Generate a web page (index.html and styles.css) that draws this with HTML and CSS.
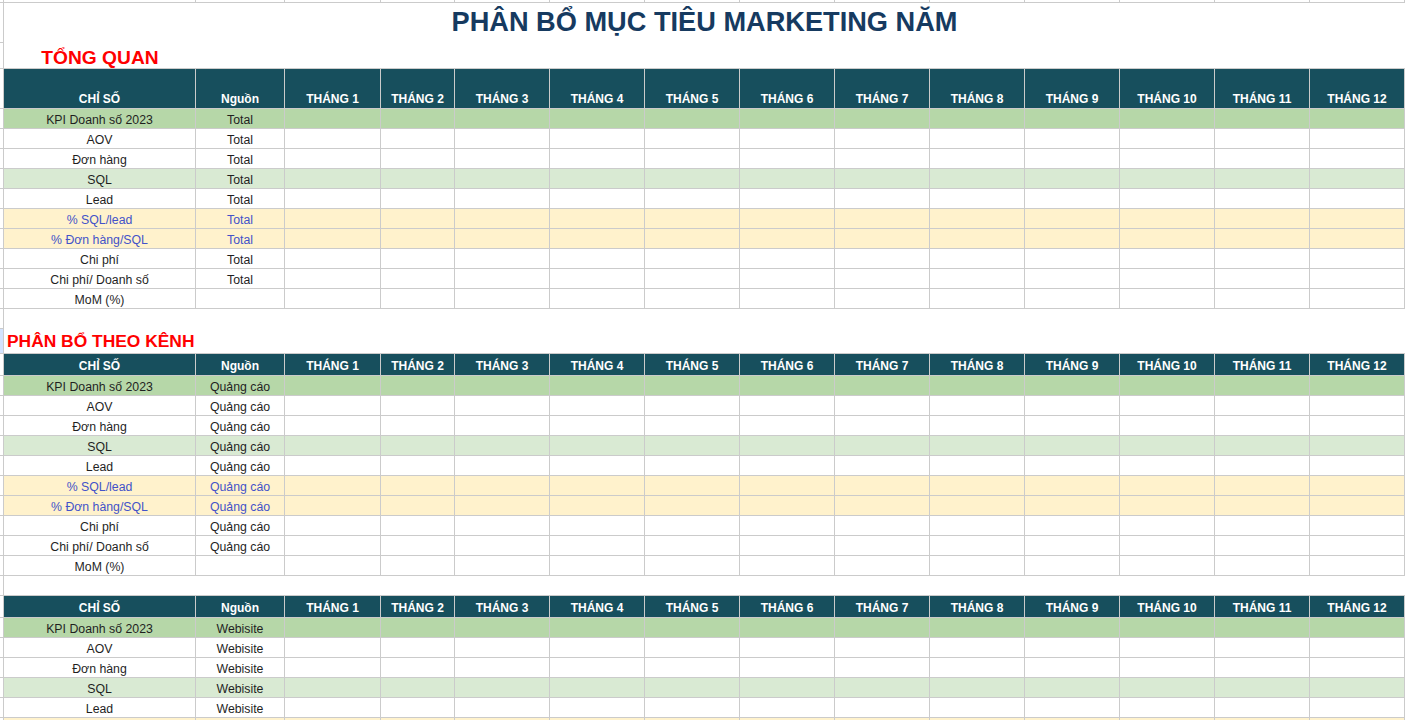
FILE: index.html
```html
<!DOCTYPE html>
<html lang="vi">
<head>
<meta charset="utf-8">
<title>Phân bổ mục tiêu marketing năm</title>
<link rel="stylesheet" href="styles.css">
</head>
<body>
<div class="sheet">
  <div class="row top"><div></div><div></div><div></div><div></div><div></div><div></div><div></div><div></div><div></div><div></div><div></div><div></div><div></div><div></div><div></div></div>
  <div class="row title-row"><div class="s"></div><div class="title">PHÂN BỔ MỤC TIÊU MARKETING NĂM</div></div>
  <div class="row sec sec1"><div class="s"></div><div class="seca center">TỔNG QUAN</div><div class="secfill"></div></div>

  <div class="row head tall"><div class="s"></div><div class="h-a">CHỈ SỐ</div><div class="h-a">Nguồn</div><div>THÁNG 1</div><div>THÁNG 2</div><div>THÁNG 3</div><div>THÁNG 4</div><div>THÁNG 5</div><div>THÁNG 6</div><div>THÁNG 7</div><div>THÁNG 8</div><div>THÁNG 9</div><div>THÁNG 10</div><div>THÁNG 11</div><div>THÁNG 12</div></div>
  <div class="row data kpi"><div class="s"></div><div class="t">KPI Doanh số 2023</div><div class="t">Total</div><div></div><div></div><div></div><div></div><div></div><div></div><div></div><div></div><div></div><div></div><div></div><div></div></div>
  <div class="row data"><div class="s"></div><div class="t">AOV</div><div class="t">Total</div><div></div><div></div><div></div><div></div><div></div><div></div><div></div><div></div><div></div><div></div><div></div><div></div></div>
  <div class="row data"><div class="s"></div><div class="t">Đơn hàng</div><div class="t">Total</div><div></div><div></div><div></div><div></div><div></div><div></div><div></div><div></div><div></div><div></div><div></div><div></div></div>
  <div class="row data sql"><div class="s"></div><div class="t">SQL</div><div class="t">Total</div><div></div><div></div><div></div><div></div><div></div><div></div><div></div><div></div><div></div><div></div><div></div><div></div></div>
  <div class="row data"><div class="s"></div><div class="t">Lead</div><div class="t">Total</div><div></div><div></div><div></div><div></div><div></div><div></div><div></div><div></div><div></div><div></div><div></div><div></div></div>
  <div class="row data rate"><div class="s"></div><div class="t">% SQL/lead</div><div class="t">Total</div><div></div><div></div><div></div><div></div><div></div><div></div><div></div><div></div><div></div><div></div><div></div><div></div></div>
  <div class="row data rate"><div class="s"></div><div class="t">% Đơn hàng/SQL</div><div class="t">Total</div><div></div><div></div><div></div><div></div><div></div><div></div><div></div><div></div><div></div><div></div><div></div><div></div></div>
  <div class="row data"><div class="s"></div><div class="t">Chi phí</div><div class="t">Total</div><div></div><div></div><div></div><div></div><div></div><div></div><div></div><div></div><div></div><div></div><div></div><div></div></div>
  <div class="row data"><div class="s"></div><div class="t">Chi phí/ Doanh số</div><div class="t">Total</div><div></div><div></div><div></div><div></div><div></div><div></div><div></div><div></div><div></div><div></div><div></div><div></div></div>
  <div class="row data"><div class="s"></div><div class="t">MoM (%)</div><div class="t"></div><div></div><div></div><div></div><div></div><div></div><div></div><div></div><div></div><div></div><div></div><div></div><div></div></div>

  <div class="row blank"><div class="s"></div><div class="blankfill"></div></div>
  <div class="row sec sec2"><div class="s sel"></div><div class="seca left">PHÂN BỔ THEO KÊNH</div><div class="secfill"></div></div>

  <div class="row head"><div class="s"></div><div class="h-a">CHỈ SỐ</div><div class="h-a">Nguồn</div><div>THÁNG 1</div><div>THÁNG 2</div><div>THÁNG 3</div><div>THÁNG 4</div><div>THÁNG 5</div><div>THÁNG 6</div><div>THÁNG 7</div><div>THÁNG 8</div><div>THÁNG 9</div><div>THÁNG 10</div><div>THÁNG 11</div><div>THÁNG 12</div></div>
  <div class="row data kpi"><div class="s"></div><div class="t">KPI Doanh số 2023</div><div class="t">Quảng cáo</div><div></div><div></div><div></div><div></div><div></div><div></div><div></div><div></div><div></div><div></div><div></div><div></div></div>
  <div class="row data"><div class="s"></div><div class="t">AOV</div><div class="t">Quảng cáo</div><div></div><div></div><div></div><div></div><div></div><div></div><div></div><div></div><div></div><div></div><div></div><div></div></div>
  <div class="row data"><div class="s"></div><div class="t">Đơn hàng</div><div class="t">Quảng cáo</div><div></div><div></div><div></div><div></div><div></div><div></div><div></div><div></div><div></div><div></div><div></div><div></div></div>
  <div class="row data sql"><div class="s"></div><div class="t">SQL</div><div class="t">Quảng cáo</div><div></div><div></div><div></div><div></div><div></div><div></div><div></div><div></div><div></div><div></div><div></div><div></div></div>
  <div class="row data"><div class="s"></div><div class="t">Lead</div><div class="t">Quảng cáo</div><div></div><div></div><div></div><div></div><div></div><div></div><div></div><div></div><div></div><div></div><div></div><div></div></div>
  <div class="row data rate"><div class="s"></div><div class="t">% SQL/lead</div><div class="t">Quảng cáo</div><div></div><div></div><div></div><div></div><div></div><div></div><div></div><div></div><div></div><div></div><div></div><div></div></div>
  <div class="row data rate"><div class="s"></div><div class="t">% Đơn hàng/SQL</div><div class="t">Quảng cáo</div><div></div><div></div><div></div><div></div><div></div><div></div><div></div><div></div><div></div><div></div><div></div><div></div></div>
  <div class="row data"><div class="s"></div><div class="t">Chi phí</div><div class="t">Quảng cáo</div><div></div><div></div><div></div><div></div><div></div><div></div><div></div><div></div><div></div><div></div><div></div><div></div></div>
  <div class="row data"><div class="s"></div><div class="t">Chi phí/ Doanh số</div><div class="t">Quảng cáo</div><div></div><div></div><div></div><div></div><div></div><div></div><div></div><div></div><div></div><div></div><div></div><div></div></div>
  <div class="row data"><div class="s"></div><div class="t">MoM (%)</div><div class="t"></div><div></div><div></div><div></div><div></div><div></div><div></div><div></div><div></div><div></div><div></div><div></div><div></div></div>

  <div class="row blank ruled"><div class="s"></div><div class="blankfill"></div></div>

  <div class="row head"><div class="s"></div><div class="h-a">CHỈ SỐ</div><div class="h-a">Nguồn</div><div>THÁNG 1</div><div>THÁNG 2</div><div>THÁNG 3</div><div>THÁNG 4</div><div>THÁNG 5</div><div>THÁNG 6</div><div>THÁNG 7</div><div>THÁNG 8</div><div>THÁNG 9</div><div>THÁNG 10</div><div>THÁNG 11</div><div>THÁNG 12</div></div>
  <div class="row data kpi"><div class="s"></div><div class="t">KPI Doanh số 2023</div><div class="t">Webisite</div><div></div><div></div><div></div><div></div><div></div><div></div><div></div><div></div><div></div><div></div><div></div><div></div></div>
  <div class="row data"><div class="s"></div><div class="t">AOV</div><div class="t">Webisite</div><div></div><div></div><div></div><div></div><div></div><div></div><div></div><div></div><div></div><div></div><div></div><div></div></div>
  <div class="row data"><div class="s"></div><div class="t">Đơn hàng</div><div class="t">Webisite</div><div></div><div></div><div></div><div></div><div></div><div></div><div></div><div></div><div></div><div></div><div></div><div></div></div>
  <div class="row data sql"><div class="s"></div><div class="t">SQL</div><div class="t">Webisite</div><div></div><div></div><div></div><div></div><div></div><div></div><div></div><div></div><div></div><div></div><div></div><div></div></div>
  <div class="row data"><div class="s"></div><div class="t">Lead</div><div class="t">Webisite</div><div></div><div></div><div></div><div></div><div></div><div></div><div></div><div></div><div></div><div></div><div></div><div></div></div>
  <div class="row data rate"><div class="s"></div><div class="t"></div><div class="t"></div><div></div><div></div><div></div><div></div><div></div><div></div><div></div><div></div><div></div><div></div><div></div><div></div></div>
</div>
</body>
</html>
```

FILE: styles.css
```css
html, body {
  margin: 0;
  padding: 0;
  background: #ffffff;
}

body {
  font-family: "Liberation Sans", Arial, sans-serif;
  color: #1f1f1f;
  width: 1407px;
  height: 720px;
  overflow: hidden;
}

.sheet {
  width: 1407px;
}

.row {
  display: grid;
  grid-template-columns: 4px 192px 89px 96px 74px repeat(10, 95px);
}

.row > div {
  box-sizing: border-box;
  border-right: 1px solid #cbcbcb;
  border-bottom: 1px solid #cbcbcb;
}

/* leftmost row-header strip */
.row > .s {
  background: #ffffff;
}

.row > .s.sel {
  background: #d3e3fd;
}

.top {
  height: 3px;
}

/* title */
.title-row {
  height: 40px;
}

.title-row > .title {
  grid-column: 2 / -1;
  border: none;
  text-align: center;
  font-size: 27.2px;
  font-weight: bold;
  color: #163a60;
  line-height: 38px;
}

/* section labels */
.sec1 {
  height: 26px;
}

.sec2 {
  height: 25px;
}

.row > .seca {
  border-right: none;
  display: flex;
  align-items: flex-end;
  color: #ff0000;
  font-weight: bold;
  white-space: nowrap;
}

.seca.center {
  justify-content: center;
  font-size: 19.2px;
  line-height: 21px;
}

.seca.left {
  justify-content: flex-start;
  padding-left: 3px;
  padding-bottom: 2px;
  font-size: 17.4px;
  line-height: 19px;
}

.row > .secfill {
  grid-column: 3 / -1;
  border-right: none;
}

/* blank spacer rows */
.blank {
  height: 20px;
}

.row > .blankfill {
  grid-column: 2 / -1;
  border: none;
}

.blank.ruled > .blankfill {
  border-bottom: 1px solid #cbcbcb;
}

/* header rows */
.head {
  height: 22px;
}

.head.tall {
  height: 40px;
}

.head > div:not(.s) {
  background: #174f5d;
  color: #ffffff;
  font-weight: bold;
  font-size: 12px;
  line-height: 14px;
  display: flex;
  align-items: flex-end;
  justify-content: center;
  padding-bottom: 2px;
  white-space: nowrap;
}

.head > .h-a {
  font-size: 13px;
}

/* data rows */
.data {
  height: 20px;
}

.data > div:not(.s) {
  font-size: 12.3px;
  line-height: 14px;
  display: flex;
  align-items: flex-end;
  justify-content: center;
  padding-bottom: 1px;
  white-space: nowrap;
}

.kpi > div:not(.s) {
  background: #b6d7a8;
}

.sql > div:not(.s) {
  background: #d9ead3;
}

.rate > div:not(.s) {
  background: #fff2cc;
  color: #4352c9;
}
```
